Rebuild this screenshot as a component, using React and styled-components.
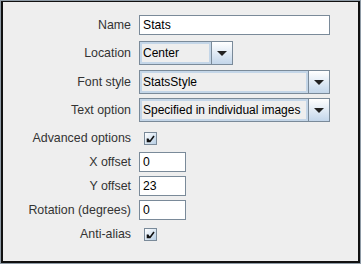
import React from 'react'
import styled, { createGlobalStyle } from 'styled-components'

const Global = createGlobalStyle`
html, body {
  margin: 0;
  padding: 0;
  background: #eeeeee;
}
`;

const Frame = styled.div`
width: 361px;
height: 264px;
box-sizing: border-box;
border: 1px solid #8f9ba6;
background: #eeeeee;
display: flex;
`;

const Panel = styled.div`
flex: 1;
border-style: solid;
border-color: #111;
border-width: 1px 2px 2px 2px;
padding: 13px 0 0 0;
font-family: "Liberation Sans", Arial, sans-serif;
font-size: 12.4px;
`;

const Form = styled.div`
display: grid;
grid-template-columns: 128px auto;
column-gap: 8px;
align-items: center;
`;

const Label = styled.div`
color: #333333;
text-align: right;
white-space: nowrap;
margin-top: ${({top})=>top || 0}px;
`;

const Cell = styled.div`
display: flex;
align-items: center;
height: ${({h})=>h}px;
margin-top: ${({top})=>top || 0}px;
`;

const TextField = styled.div`
box-sizing: border-box;
width: ${({w})=>w}px;
height: 20px;
border: 1px solid #7a8a99;
background: #fff;
color: #000;
font-size: 12.2px;
padding: 0 3px;
line-height: 18px;
`;

const Combo = styled.div`
box-sizing: border-box;
width: ${({w})=>w}px;
height: 24px;
border: 1px solid #7a8a99;
display: flex;
background: #eeeeee;
`;

const ComboValue = styled.div`
flex: 1;
box-shadow: inset 0 0 0 2px #c4d6e8;
color: #000;
font-size: 12px;
padding: 0 2px 0 3px;
line-height: 22px;
white-space: nowrap;
overflow: hidden;
`;

const ComboButton = styled.div`
width: 20px;
border-left: 1px solid #7a8a99;
background: linear-gradient(#ffffff, #c3d6ea);
display: flex;
align-items: center;
justify-content: center;
`;

const Arrow = styled.div`
width: 0;
height: 0;
border-left: 5px solid transparent;
border-right: 5px solid transparent;
border-top: 5px solid #222;
`;

const Check = styled.div`
box-sizing: border-box;
width: 13px;
height: 13px;
margin-left: 5px;
border: 1px solid #7a8a99;
background: linear-gradient(135deg, #ffffff, #b8cfe5);
display: flex;
align-items: center;
justify-content: center;
`;

function ComboBox({w, value}) {
  return (
    <Combo w={w}>
      <ComboValue>{value}</ComboValue>
      <ComboButton><Arrow /></ComboButton>
    </Combo>
  )
}

function CheckBox() {
  return (
    <Check>
      <svg width="9" height="9" viewBox="0 0 9 9">
        <path d="M1.5 4.5 L1.5 7.5 L4 7.5 L8 2" stroke="#111" strokeWidth="1.6" fill="none" />
        <path d="M1.5 5 L3.5 7.5" stroke="#111" strokeWidth="2" fill="none" />
      </svg>
    </Check>
  )
}

function App() {
  return (
    <>
      <Global />
      <Frame>
        <Panel>
          <Form>
            <Label>Name</Label>
            <Cell h={20}><TextField w={191}>Stats</TextField></Cell>

            <Label top={6}>Location</Label>
            <Cell h={24} top={6}><ComboBox w={94} value="Center" /></Cell>

            <Label top={5}>Font style</Label>
            <Cell h={24} top={5}><ComboBox w={191} value="StatsStyle" /></Cell>

            <Label top={4}>Text option</Label>
            <Cell h={24} top={4}><ComboBox w={191} value="Specified in individual images" /></Cell>

            <Label top={6}>Advanced options</Label>
            <Cell h={20} top={6}><CheckBox /></Cell>

            <Label top={4}>X offset</Label>
            <Cell h={20} top={4}><TextField w={47}>0</TextField></Cell>

            <Label top={4}>Y offset</Label>
            <Cell h={20} top={4}><TextField w={47}>23</TextField></Cell>

            <Label top={4}>Rotation (degrees)</Label>
            <Cell h={20} top={4}><TextField w={47}>0</TextField></Cell>

            <Label top={4}>Anti-alias</Label>
            <Cell h={20} top={4}><CheckBox /></Cell>
          </Form>
        </Panel>
      </Frame>
    </>
  )
}

export default App
